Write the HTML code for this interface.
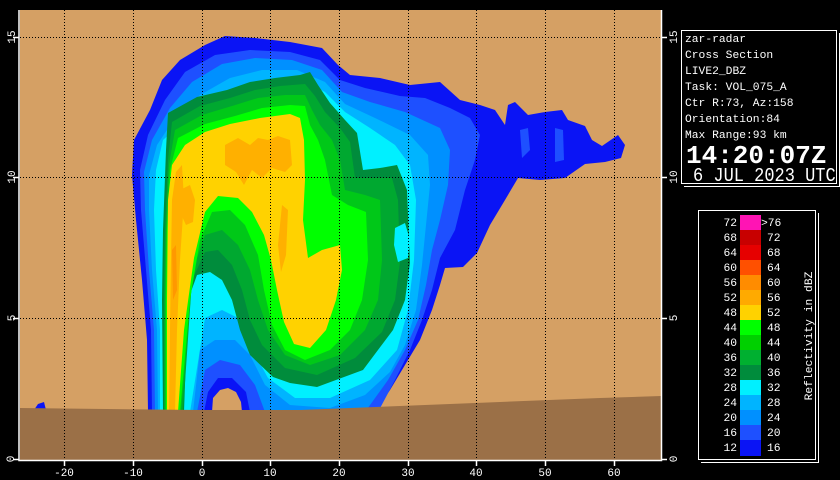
<!DOCTYPE html>
<html><head><meta charset="utf-8"><style>
html,body{margin:0;padding:0;background:#000;width:840px;height:480px;overflow:hidden}
svg{display:block}
text{font-family:"Liberation Mono","DejaVu Sans Mono",monospace;fill:#fff}
</style></head><body>
<svg width="840" height="480" viewBox="0 0 840 480" xmlns="http://www.w3.org/2000/svg">
<rect width="840" height="480" fill="#000"/>
<clipPath id="pc"><rect x="20" y="10" width="641" height="450"/></clipPath>
<g clip-path="url(#pc)">
<rect x="20" y="10" width="641" height="450" fill="#d5a064"/>
<path fill="#0a14f5" d="M148,412 L147,340 L142,280 L136,220 L132,175 L134,140 L150,110 L162,80 L180,60 L205,45 L225,36 L255,38 L290,42 L322,48 L338,65 L350,75 L380,78 L410,85 L440,82 L460,100 L480,105 L495,110 L505,125 L508,105 L515,102 L528,115 L545,112 L562,110 L568,120 L585,126 L592,140 L602,146 L618,135 L625,145 L621,158 L605,162 L585,164 L565,178 L540,180 L518,178 L505,200 L490,225 L477,253 L463,267 L445,268 L440,285 L432,310 L420,340 L405,365 L390,390 L375,412 Z"/>
<path fill="#0a14f5" d="M34,410 L38,404 L44,402 L46,410 Z"/>
<path fill="#1e50ff" d="M152,412 L151,330 L146,270 L141,210 L140,170 L148,135 L165,100 L185,72 L215,55 L250,50 L290,52 L320,60 L340,80 L365,88 L400,96 L425,98 L450,108 L470,118 L480,135 L475,160 L465,190 L455,230 L440,258 L432,290 L422,320 L410,350 L395,380 L378,412 L250,412 L246,392 L232,378 L218,378 L208,392 L204,412 Z"/>
<path fill="#1e50ff" d="M520,130 L528,128 L530,150 L522,158 Z M555,128 L563,130 L564,160 L555,162 Z"/>
<path fill="#0090ff" d="M155,412 L154,330 L149,270 L145,210 L144,172 L152,140 L170,108 L192,82 L222,64 L255,58 L292,60 L322,70 L342,92 L370,102 L405,112 L440,128 L450,150 L448,185 L440,220 L432,250 L426,285 L418,320 L405,350 L388,380 L365,412 L265,412 L255,385 L240,365 L220,360 L205,370 L197,412 Z"/>
<path fill="#00b4ff" d="M158,412 L157,330 L152,270 L149,210 L149,175 L157,145 L175,118 L200,95 L230,78 L262,70 L297,70 L325,82 L345,104 L375,118 L410,135 L428,155 L430,185 L426,225 L422,265 L416,310 L405,345 L390,372 L365,395 L330,408 L290,405 L265,385 L250,355 L235,340 L215,340 L200,350 L193,412 Z"/>
<path fill="#00f0ff" d="M160,412 L160,330 L156,270 L154,210 L156,170 L163,140 L180,125 L205,105 L235,90 L270,80 L300,78 L325,92 L345,112 L370,128 L395,145 L410,165 L416,200 L414,260 L408,310 L397,350 L370,380 L330,398 L295,398 L268,378 L250,345 L238,318 L222,310 L205,318 L190,412 Z"/>
<path fill="#008c3c" d="M163,412 L162,300 L163,230 L166,150 L168,113 L197,97 L227,90 L250,82 L275,78 L300,75 L310,72 L318,85 L330,103 L345,120 L357,133 L363,170 L380,168 L397,165 L407,190 L410,263 L405,300 L393,330 L363,370 L317,387 L290,383 L273,377 L250,355 L240,330 L232,300 L222,280 L210,272 L197,275 L188,300 L184,412 Z"/>
<path fill="#00a830" d="M164,412 L164,300 L165,230 L168,160 L172,122 L200,106 L230,98 L255,90 L280,86 L305,84 L315,96 L325,112 L340,128 L350,142 L355,178 L375,178 L392,178 L398,200 L400,262 L395,300 L382,332 L355,358 L317,375 L285,368 L262,345 L250,320 L242,290 L232,265 L218,250 L205,252 L192,280 L183,412 Z"/>
<path fill="#00c818" d="M165,412 L165,300 L166,230 L169,165 L175,130 L202,115 L232,106 L258,98 L285,95 L305,95 L312,110 L320,125 L332,140 L340,160 L345,190 L365,195 L380,200 L382,260 L378,300 L365,330 L340,355 L310,365 L285,355 L268,330 L258,300 L250,270 L238,245 L222,230 L205,235 L193,270 L181,412 Z"/>
<path fill="#00ff00" d="M166,412 L166,300 L167,230 L170,170 L178,138 L205,124 L235,116 L262,108 L290,105 L305,106 L310,125 L318,140 L325,160 L332,195 L348,205 L366,212 L368,260 L362,300 L350,330 L330,350 L305,360 L285,350 L272,325 L264,290 L258,255 L245,225 L230,210 L212,212 L200,240 L190,300 L180,412 Z"/>
<path fill="#ffd200" d="M167,412 L167,300 L168,200 L172,165 L185,145 L205,132 L230,124 L260,118 L290,114 L300,118 L304,140 L305,180 L303,220 L308,258 L322,250 L340,245 L342,270 L336,300 L326,330 L310,348 L294,344 L284,322 L277,290 L271,260 L264,235 L252,212 L238,198 L218,196 L205,212 L194,258 L184,330 L178,412 Z"/>
<path fill="#ffb000" d="M169,412 L170,330 L171,260 L172,200 L176,172 L182,165 L184,200 L180,260 L177,330 L175,412 Z"/>
<path fill="#ffb000" d="M225,145 L238,138 L250,145 L258,138 L268,140 L278,136 L290,140 L292,165 L285,172 L272,168 L262,178 L252,170 L244,185 L236,172 L225,165 Z"/>
<path fill="#ffb000" d="M180,190 L190,185 L195,200 L193,222 L186,225 L180,212 Z"/>
<path fill="#ffb000" d="M282,205 L288,210 L286,255 L281,272 L278,245 Z"/>
<path fill="#ff9800" d="M172,250 L176,245 L177,290 L173,300 Z"/>
<path fill="#00f0ff" d="M395,228 L405,223 L410,240 L408,258 L398,262 L394,245 Z"/>
<path fill="#d5a064" d="M212,412 L213,398 L220,390 L228,388 L236,392 L241,402 L242,412 Z"/>
<path fill="#9b7047" d="M20,408 L200,410 L300,410 L400,406 L500,402 L600,398 L661,396 L661,460 L20,460 Z"/>
<g stroke="#000" stroke-width="1" stroke-dasharray="1,2" fill="none">
<path d="M64.5,10V460 M133.5,10V460 M202.5,10V460 M270.5,10V460 M339.5,10V460 M408.5,10V460 M476.5,10V460 M545.5,10V460 M614.5,10V460"/>
<path d="M20,37.5H661 M20,177.5H661 M20,318.5H661"/>
</g>
</g>
<g stroke="#fff" stroke-width="1.5" fill="none">
<path d="M19,10V460.5H661.5V10"/>
<path d="M13,37.5H19 M13,177.5H19 M13,318.5H19 M13,459.5H19"/>
<path d="M661,37.5H667 M661,177.5H667 M661,318.5H667 M661,459.5H667"/>
<path d="M64.5,460V466 M133.5,460V466 M202.5,460V466 M270.5,460V466 M339.5,460V466 M408.5,460V466 M476.5,460V466 M545.5,460V466 M614.5,460V466"/>
</g>
<g font-size="11" text-anchor="middle">
<text transform="translate(11,37) rotate(-90)" dy="4">15</text>
<text transform="translate(11,177) rotate(-90)" dy="4">10</text>
<text transform="translate(11,318) rotate(-90)" dy="4">5</text>
<text transform="translate(10,459) rotate(-90)" dy="4">0</text>
<text transform="translate(673,37) rotate(-90)" dy="4">15</text>
<text transform="translate(673,177) rotate(-90)" dy="4">10</text>
<text transform="translate(673,318) rotate(-90)" dy="4">5</text>
<text transform="translate(673,459) rotate(-90)" dy="4">0</text>
<text x="64" y="476">-20</text><text x="133" y="476">-10</text><text x="202" y="476">0</text><text x="270" y="476">10</text><text x="339" y="476">20</text><text x="408" y="476">30</text><text x="476" y="476">40</text><text x="545" y="476">50</text><text x="614" y="476">60</text>
</g>
<rect x="681.5" y="30.5" width="155" height="153" fill="#000" stroke="#fff" stroke-width="1"/>
<path d="M684,186.5H839.5V33" stroke="#fff" fill="none"/>
<g font-size="11.3">
<text x="685" y="42">zar-radar</text>
<text x="685" y="58">Cross Section</text>
<text x="685" y="74">LIVE2_DBZ</text>
<text x="685" y="90">Task: VOL_075_A</text>
<text x="685" y="106">Ctr R:73, Az:158</text>
<text x="685" y="122">Orientation:84</text>
<text x="685" y="138">Max Range:93 km</text>
</g>
<text x="686" y="163" font-size="26" font-weight="bold">14:20:07Z</text>
<text transform="translate(693,181) scale(1,1.15)" font-size="17">6 JUL 2023 UTC</text>
<rect x="698.5" y="210.5" width="117" height="249" fill="#000" stroke="#fff"/>
<path d="M701,462.5H818.5V213" stroke="#fff" fill="none"/>
<g>
<rect x="740" y="215" width="21" height="15.1" fill="#ff14b4"/>
<rect x="740" y="230" width="21" height="15.1" fill="#c80000"/>
<rect x="740" y="245" width="21" height="15.1" fill="#e60000"/>
<rect x="740" y="260" width="21" height="15.1" fill="#ff5000"/>
<rect x="740" y="275" width="21" height="15.1" fill="#ff8c00"/>
<rect x="740" y="290" width="21" height="15.1" fill="#ffaa00"/>
<rect x="740" y="305" width="21" height="15.1" fill="#ffd200"/>
<rect x="740" y="320" width="21" height="15.1" fill="#00ff00"/>
<rect x="740" y="335" width="21" height="15.1" fill="#00d000"/>
<rect x="740" y="350" width="21" height="15.1" fill="#00b030"/>
<rect x="740" y="365" width="21" height="15.1" fill="#008c3c"/>
<rect x="740" y="380" width="21" height="15.1" fill="#00f0ff"/>
<rect x="740" y="395" width="21" height="15.1" fill="#00b4ff"/>
<rect x="740" y="410" width="21" height="15.1" fill="#0090ff"/>
<rect x="740" y="425" width="21" height="15.1" fill="#1e50ff"/>
<rect x="740" y="440" width="21" height="16" fill="#0a14f5"/>
</g>
<g font-size="11.3">
<g text-anchor="end">
<text x="737" y="226">72</text><text x="737" y="241">68</text><text x="737" y="256">64</text><text x="737" y="271">60</text><text x="737" y="286">56</text><text x="737" y="301">52</text><text x="737" y="316">48</text><text x="737" y="331">44</text><text x="737" y="346">40</text><text x="737" y="361">36</text><text x="737" y="376">32</text><text x="737" y="391">28</text><text x="737" y="406">24</text><text x="737" y="421">20</text><text x="737" y="436">16</text><text x="737" y="451">12</text>
</g>
<g>
<text x="761" y="226">&gt;76</text><text x="767" y="241">72</text><text x="767" y="256">68</text><text x="767" y="271">64</text><text x="767" y="286">60</text><text x="767" y="301">56</text><text x="767" y="316">52</text><text x="767" y="331">48</text><text x="767" y="346">44</text><text x="767" y="361">40</text><text x="767" y="376">36</text><text x="767" y="391">32</text><text x="767" y="406">28</text><text x="767" y="421">24</text><text x="767" y="436">20</text><text x="767" y="451">16</text>
</g>
<text transform="translate(812,336) rotate(-90)" text-anchor="middle">Reflectivity in dBZ</text>
</g>
</svg>
</body></html>
